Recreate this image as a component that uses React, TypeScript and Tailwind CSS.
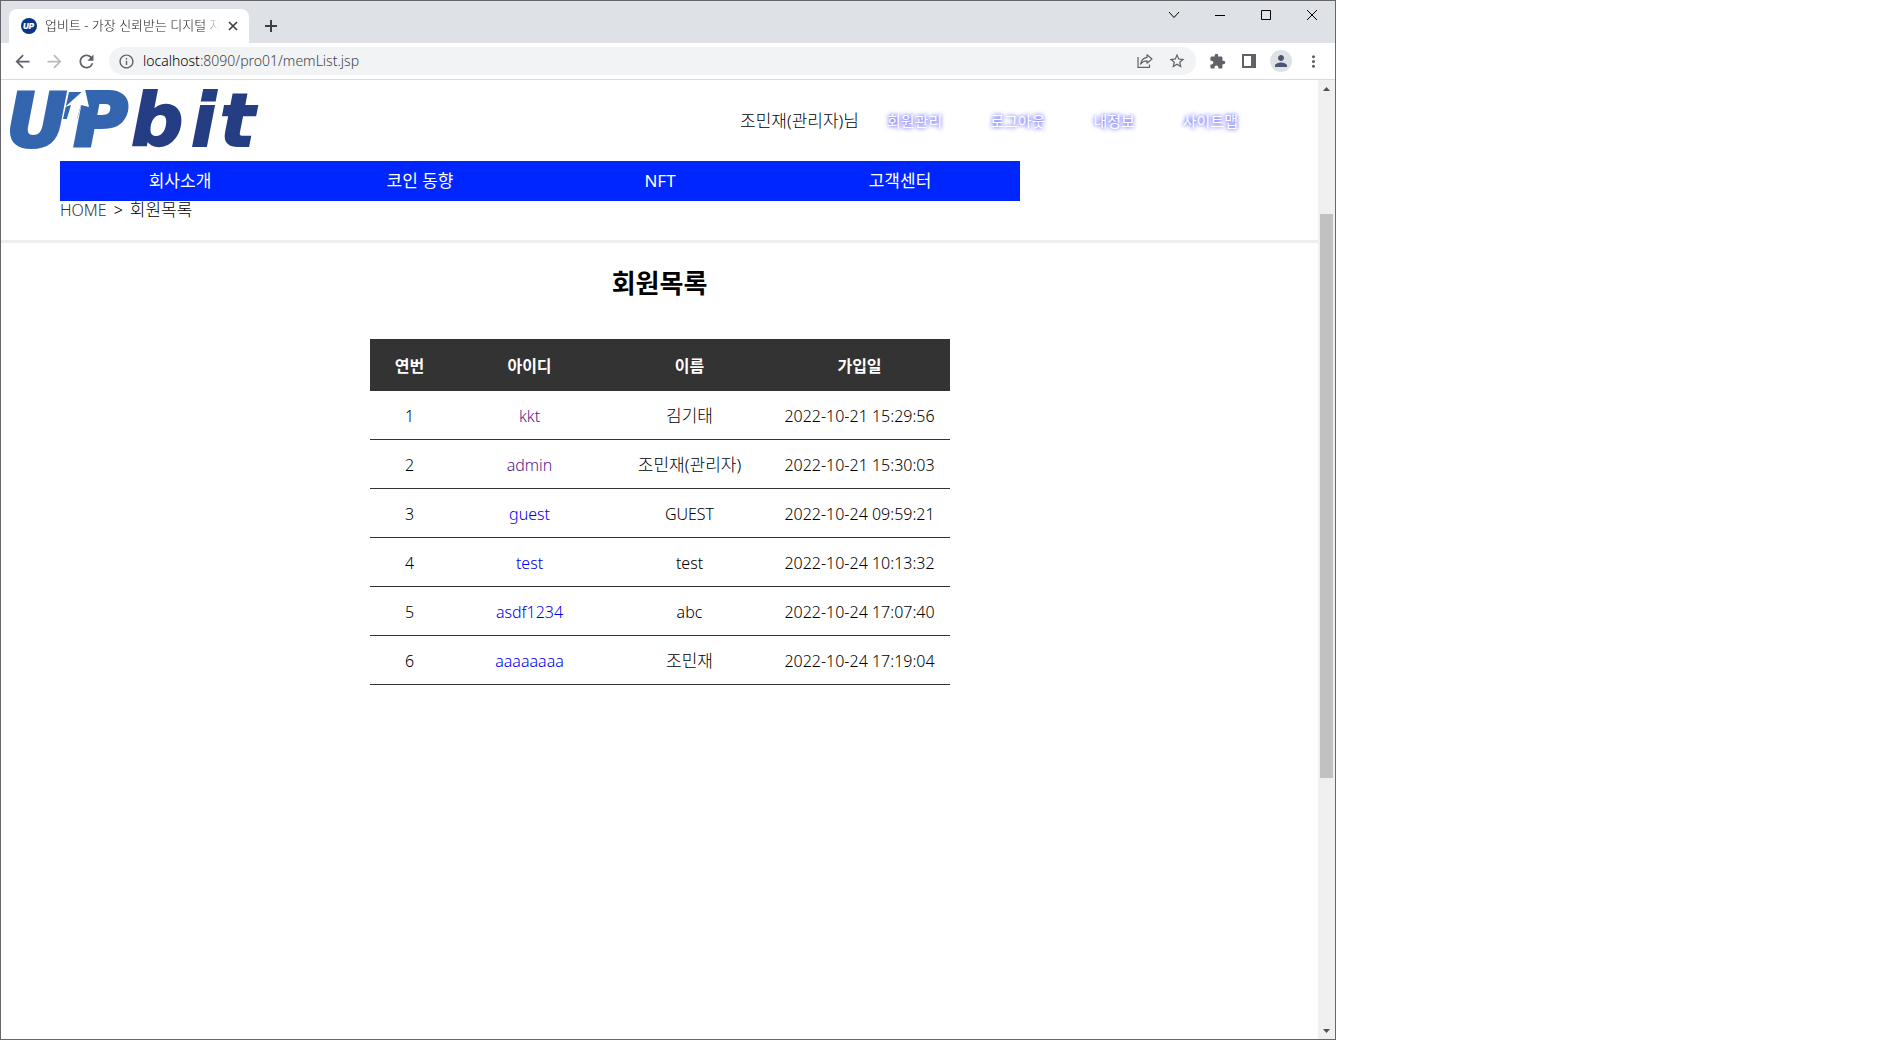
import type { ReactNode } from "react";
import {
  MdArrowBack,
  MdArrowForward,
  MdExtension,
  MdInfoOutline,
  MdMoreVert,
  MdPerson,
  MdRefresh,
  MdStarBorder,
} from "react-icons/md";

type Member = { no: number; id: string; name: string; joined: string; visited?: boolean };

const members: Member[] = [
  { no: 1, id: "kkt", name: "김기태", joined: "2022-10-21 15:29:56", visited: true },
  { no: 2, id: "admin", name: "조민재(관리자)", joined: "2022-10-21 15:30:03", visited: true },
  { no: 3, id: "guest", name: "GUEST", joined: "2022-10-24 09:59:21" },
  { no: 4, id: "test", name: "test", joined: "2022-10-24 10:13:32" },
  { no: 5, id: "asdf1234", name: "abc", joined: "2022-10-24 17:07:40" },
  { no: 6, id: "aaaaaaaa", name: "조민재", joined: "2022-10-24 17:19:04" },
];

const userLinks = ["회원관리", "로그아웃", "내정보", "사이트맵"];
const menu = ["회사소개", "코인 동향", "NFT", "고객센터"];

function IconButton({ label, className = "", children }: { label: string; className?: string; children: ReactNode }) {
  return (
    <button type="button" aria-label={label} className={`flex items-center justify-center ${className}`}>
      {children}
    </button>
  );
}

function Favicon() {
  return (
    <svg width="16" height="16" viewBox="0 0 16 16" aria-hidden="true" className="shrink-0">
      <circle cx="8" cy="8" r="8" fill="#093687" />
      <text x="7.5" y="11" textAnchor="middle" fontSize="8" fontWeight="900" fontStyle="italic" fontFamily="Inter, sans-serif" fill="#fff">
        UP
      </text>
    </svg>
  );
}

function Logo() {
  return (
    <svg width="256" height="60" viewBox="0 0 256 60" role="img" aria-label="UPbit" className="overflow-visible">
      <g fontFamily="DejaVu Sans" fontSize="73" fontWeight="700" fontStyle="italic" strokeWidth="2">
        <text x="-2 65" y="57" fill="#3465af" stroke="#3465af" strokeWidth="4">
          UP
        </text>
        <text x="122 182 211" y="57" fill="#253e83" stroke="#253e83">
          bit
        </text>
      </g>
      <path d="M60 3H76L68 30H54Z" fill="#3465af" />
      <path d="M76 0L56 18L62 16L49 59H59L72 16L80 18Z" fill="#fff" />
    </svg>
  );
}

function TitleBar() {
  return (
    <div className="flex h-[42px] justify-between bg-[#dee1e6]">
      <div className="flex items-end pl-2">
        <div className="flex h-[34px] w-60 items-center rounded-t-lg bg-white pr-2 pl-3">
          <Favicon />
          <span className="ml-2 w-[178px] overflow-hidden text-[13px] font-light whitespace-nowrap text-[#202124] [mask-image:linear-gradient(to_right,#000_90%,transparent_99%)]">
            업비트 - 가장 신뢰받는 디지털 자
          </span>
          <IconButton label="탭 닫기" className="ml-1 h-4 w-4">
            <svg width="10" height="10" viewBox="0 0 10 10" stroke="#3c4043" strokeWidth="1.7">
              <path d="M1 1L9 9M9 1L1 9" />
            </svg>
          </IconButton>
        </div>
        <IconButton label="새 탭" className="ml-3.5 h-[34px] w-4">
          <svg width="14" height="14" viewBox="0 0 14 14" stroke="#3c4043" strokeWidth="2">
            <path d="M7 1V13M1 7H13" />
          </svg>
        </IconButton>
      </div>
      <div className="flex h-7 text-black">
        <IconButton label="탭 검색" className="w-[46px]">
          <svg width="12" height="8" viewBox="0 0 12 8" fill="none" stroke="currentColor">
            <path d="M1 1L6 6.5L11 1" />
          </svg>
        </IconButton>
        <IconButton label="최소화" className="w-[46px]">
          <svg width="10" height="10" viewBox="0 0 10 10" stroke="currentColor">
            <path d="M0 5.5H10" />
          </svg>
        </IconButton>
        <IconButton label="최대화" className="w-[46px]">
          <svg width="10" height="10" viewBox="0 0 10 10" fill="none" stroke="currentColor">
            <path d="M.5 .5H9.5V9.5H.5Z" />
          </svg>
        </IconButton>
        <IconButton label="닫기" className="w-[46px]">
          <svg width="10" height="10" viewBox="0 0 10 10" stroke="currentColor">
            <path d="M0 0L10 10M10 0L0 10" />
          </svg>
        </IconButton>
      </div>
    </div>
  );
}

function Toolbar() {
  return (
    <div className="flex h-[37px] items-center border-b border-[#d9dadc] bg-white text-[#5f6368]">
      <div className="flex w-[108px] pl-[5px]">
        <IconButton label="뒤로" className="w-8">
          <MdArrowBack size={21} />
        </IconButton>
        <IconButton label="앞으로" className="w-8 text-[#b9bcbf]">
          <MdArrowForward size={21} />
        </IconButton>
        <IconButton label="새로고침" className="w-8">
          <MdRefresh size={21} />
        </IconButton>
      </div>
      <div className="flex h-7 flex-1 items-center rounded-full bg-[#f1f3f4] pr-[3px] pl-[9px]">
        <MdInfoOutline size={17} />
        <a href="#address" className="ml-2 flex-1 pb-0.5 text-[14px] font-light text-[#404448]">
          <span className="text-black">localhost</span>:8090/pro01/memList.jsp
        </a>
        <IconButton label="공유" className="w-8">
          <svg width="16" height="16" viewBox="0 0 16 16" fill="none" stroke="currentColor" strokeWidth="1.2">
            <path d="M1 4V14.4H12.5V11.5" />
            <path d="M10 1.8L15 6L10 10.2V7.8C7 7.8 5 9 3.6 11.2C4.2 7.4 6.4 4.8 10 4.3Z" strokeLinejoin="round" />
          </svg>
        </IconButton>
        <IconButton label="북마크" className="w-8">
          <MdStarBorder size={18} />
        </IconButton>
      </div>
      <div className="flex pr-[6px] pl-[5px]">
        <IconButton label="확장 프로그램" className="w-8">
          <MdExtension size={17} />
        </IconButton>
        <IconButton label="측면 패널" className="w-8">
          <svg width="14" height="14" viewBox="0 0 14 14">
            <path d="M0 0H14V14H0ZM2 2V12H9V2Z" fill="currentColor" fillRule="evenodd" />
          </svg>
        </IconButton>
        <IconButton label="프로필" className="w-8">
          <span className="flex h-[22px] w-[22px] items-center justify-center rounded-full bg-[#dee1e6] text-[#4a5670]">
            <MdPerson size={18} />
          </span>
        </IconButton>
        <IconButton label="메뉴" className="w-8">
          <MdMoreVert size={19} />
        </IconButton>
      </div>
    </div>
  );
}

function Scrollbar() {
  return (
    <div className="flex w-[17px] shrink-0 flex-col items-center bg-[#f0f0f0] text-[#505050]">
      <svg width="17" height="17" viewBox="0 0 17 17" fill="currentColor" aria-hidden="true">
        <path d="M5 11L8.5 7L12 11Z" />
      </svg>
      <div className="grow-[117]" />
      <div className="w-[13px] grow-[564] bg-[#c1c1c1]" />
      <div className="grow-[244]" />
      <svg width="17" height="17" viewBox="0 0 17 17" fill="currentColor" aria-hidden="true">
        <path d="M5 7L8.5 11L12 7Z" />
      </svg>
    </div>
  );
}

function SiteHeader() {
  return (
    <header>
      <div className="flex h-[81px] items-start justify-between pt-[9px] pr-20 pl-2">
        <a href="#home">
          <Logo />
        </a>
        <div className="flex h-16 items-center">
          <span className="mr-7 text-[17px] font-light">조민재(관리자)님</span>
          <nav className="flex gap-12 text-[15px] text-white [text-shadow:0_0_4px_#0000ff]">
            {userLinks.map((label) => (
              <a key={label} href="#user">
                {label}
              </a>
            ))}
          </nav>
        </div>
      </div>
      <nav className="mx-[59px] grid h-10 max-w-[960px] grid-cols-4 items-center bg-[#0026ff] text-center text-[17px] text-white">
        {menu.map((label) => (
          <a key={label} href="#menu">
            {label}
          </a>
        ))}
      </nav>
    </header>
  );
}

function MemberTable() {
  return (
    <table className="mx-auto w-[580px] table-fixed border-separate border-spacing-0 text-center text-[16px]">
      <colgroup>
        <col className="w-[80px]" />
        <col className="w-[160px]" />
        <col className="w-[160px]" />
        <col className="w-[180px]" />
      </colgroup>
      <thead>
        <tr className="h-[52px] bg-[#333] text-white *:pt-0.5">
          <th scope="col">연번</th>
          <th scope="col">아이디</th>
          <th scope="col">이름</th>
          <th scope="col">가입일</th>
        </tr>
      </thead>
      <tbody className="font-light">
        {members.map((m) => (
          <tr key={m.no} className="h-[49px] *:border-b *:border-[#333] *:pt-0.5">
            <td>{m.no}</td>
            <td>
              <a href="#member" className={m.visited ? "text-[#551a8b]" : "text-[#0000ee]"}>
                {m.id}
              </a>
            </td>
            <td className={/[가-힣]/.test(m.name) ? "text-[17px]" : "text-[16px]"}>{m.name}</td>
            <td>{m.joined}</td>
          </tr>
        ))}
      </tbody>
    </table>
  );
}

export default function App() {
  return (
    <div className="min-h-screen bg-white">
      <div className="flex min-h-screen w-full max-w-[1336px] flex-col border border-[#67676b] font-['Noto_Sans','Noto_Sans_CJK_KR',sans-serif] text-black">
        <TitleBar />
        <Toolbar />
        <div className="flex flex-1">
          <main className="flex-1">
            <SiteHeader />
            <p className="flex h-[39px] gap-[7px] pl-[59px] text-[17px] leading-[18px] font-light">
              <a href="#home" className="text-[16px] text-[#333]">
                HOME
              </a>
              <span className="text-[16px]">&gt;</span>
              <span>회원목록</span>
            </p>
            <hr className="border-t-3 border-[#eee]" />
            <h1 className="pt-5 pb-[36px] text-center text-[26px] leading-10 font-bold">회원목록</h1>
            <MemberTable />
          </main>
          <Scrollbar />
        </div>
      </div>
    </div>
  );
}
